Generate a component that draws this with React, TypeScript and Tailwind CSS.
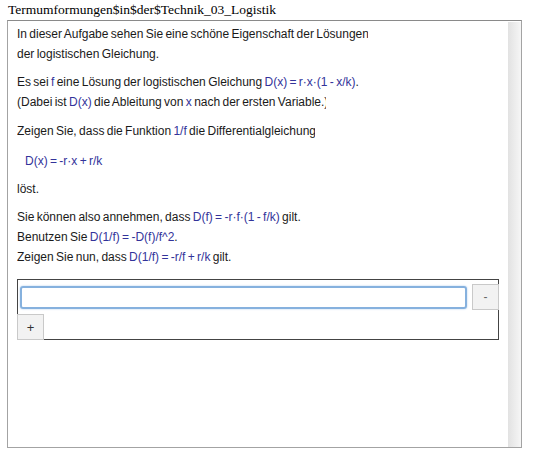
import React from 'react';

const m = 'text-[#33339a]';

function Line({ w, children }: { w?: string; children: React.ReactNode }) {
    return (
        <div className={`whitespace-nowrap overflow-hidden ${w ?? ''}`}>
            {children}
        </div>
    );
}

export default function App() {
    return (
        <div className="w-[540px] h-[453px] bg-white text-[#1a1a1a] font-['Liberation_Sans',Arial,sans-serif] text-[12px]">
            {/* Title */}
            <div className="h-[20px] pl-[8px] leading-[20px] text-[13.5px] text-black font-['Liberation_Serif','Times_New_Roman',serif]">
                Termumformungen$in$der$Technik_03_Logistik
            </div>

            {/* Panel */}
            <div className="ml-[7px] w-[515px] h-[428px] flex border border-[#a3a3a3] border-t-[#8a8a8a]">
                <div className="flex-1 pl-[9px] pt-[3px] leading-[20px] [word-spacing:-1px]">
                    <Line w="w-[351px]">
                        In dieser Aufgabe sehen Sie eine schöne Eigenschaft der Lösungen
                    </Line>
                    <Line>der logistischen Gleichung.</Line>

                    <div className="mt-[8px]">
                        <Line>
                            Es sei <span className={m}>f</span> eine Lösung der logistischen Gleichung{' '}
                            <span className={m}>D(x) = r·x·(1 - x/k)</span>.
                        </Line>
                        <Line w="w-[309px]">
                            (Dabei ist <span className={m}>D(x)</span> die Ableitung von{' '}
                            <span className={m}>x</span> nach der ersten Variable.)
                        </Line>
                    </div>

                    <div className="mt-[9px]">
                        <Line w="w-[298px]">
                            Zeigen Sie, dass die Funktion <span className={m}>1/f</span> die Differentialgleichung
                        </Line>
                    </div>

                    <div className="mt-[10px] pl-[8px]">
                        <Line>
                            <span className={m}>D(x) = -r·x + r/k</span>
                        </Line>
                    </div>

                    <div className="mt-[8px]">
                        <Line>löst.</Line>
                    </div>

                    <div className="mt-[8px]">
                        <Line>
                            Sie können also annehmen, dass <span className={m}>D(f) = -r·f·(1 - f/k)</span> gilt.
                        </Line>
                        <Line>
                            Benutzen Sie <span className={m}>D(1/f) = -D(f)/f^2</span>.
                        </Line>
                        <Line>
                            Zeigen Sie nun, dass <span className={m}>D(1/f) = -r/f + r/k</span> gilt.
                        </Line>
                    </div>

                    {/* Input list */}
                    <div className="mt-[12px] w-[482px] border border-[#444]">
                        <div className="flex items-start">
                            <input
                                className="ml-[2px] mt-[6px] w-[447px] h-[23px] rounded-[3px] border-2 border-[#86b1de] shadow-[0_0_2px_#a9c9ec] outline-none"
                                defaultValue=""
                            />
                            <button className="ml-auto -mr-px mt-[4px] w-[27px] h-[26px] border border-[#c9c9c9] bg-[#f2f2f2] text-[#666] text-[12px] leading-none">
                                -
                            </button>
                        </div>
                        <button className="-ml-px -mb-px mt-[4px] block w-[27px] h-[26px] border border-[#c9c9c9] bg-[#f2f2f2] text-[#333] text-[13px] leading-none">
                            +
                        </button>
                    </div>
                </div>

                {/* Scrollbar track */}
                <div className="w-[13px] mt-[1px] bg-gradient-to-r from-[#e2e2e2] to-[#f6f6f6]" />
            </div>
        </div>
    );
}
